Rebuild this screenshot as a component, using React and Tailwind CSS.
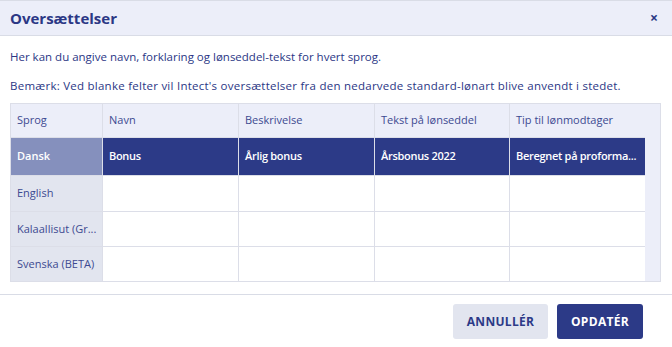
import React from 'react'

const cols = [
  { key: 'sprog', label: 'Sprog', w: 'w-[91px]' },
  { key: 'navn', label: 'Navn', w: 'w-[136px]' },
  { key: 'beskr', label: 'Beskrivelse', w: 'w-[136px]' },
  { key: 'tekst', label: 'Tekst på lønseddel', w: 'w-[135px]' },
  { key: 'tip', label: 'Tip til lønmodtager', w: 'w-[136px]' },
]

const rows = [
  { sprog: 'Dansk', navn: 'Bonus', beskr: 'Årlig bonus', tekst: 'Årsbonus 2022', tip: 'Beregnet på proforma...', h: 'h-[38px]', active: true },
  { sprog: 'English', h: 'h-[36px]' },
  { sprog: 'Kalaallisut (Gr...', h: 'h-[35px]' },
  { sprog: 'Svenska (BETA)', h: 'h-[34px]' },
]

export default function App() {
  return (
    <div className="w-[672px] h-[347px] bg-white text-[#2b3785] overflow-hidden" style={{ fontFamily: '"Open Sans", sans-serif' }}>
      {/* header */}
      <div className="h-[36px] bg-[#eceef9] border-t border-b border-[#d9dce6] flex items-center justify-between pl-[10px] pr-[14px]">
        <span className="text-[15px] font-bold">Oversættelser</span>
        <span className="text-[14px] font-bold leading-none">×</span>
      </div>

      <div className="px-[10px]">
        <p className="text-[11.5px] mt-[13px] leading-[16px]">Her kan du angive navn, forklaring og lønseddel-tekst for hvert sprog.</p>
        <p className="text-[11.5px] mt-[13px] leading-[16px] tracking-[0.25px]">Bemærk: Ved blanke felter vil Intect's oversættelser fra den nedarvede standard-lønart blive anvendt i stedet.</p>

        {/* table */}
        <div className="mt-[9px] w-[651px] border border-[#dcdee8] bg-[#eceef9] flex">
          <div className="flex flex-col">
            <div className="flex h-[34px] border-b border-[#dcdee8]">
              {cols.map((c, i) => (
                <div key={c.key} className={`${c.w} flex items-center px-[6px] text-[11px] text-[#3d4a91] ${i > 0 ? 'border-l border-[#dcdee8]' : ''}`}>
                  {c.label}
                </div>
              ))}
            </div>
            {rows.map((r, ri) => (
              <div key={r.sprog} className={`flex ${r.h} ${ri < rows.length - 1 ? 'border-b border-[#dcdee8]' : ''}`}>
                {cols.map((c, i) => {
                  let cls = ''
                  if (i === 0) cls = r.active ? 'bg-[#8590bd] text-white font-semibold' : 'bg-[#e2e5ef] text-[#3d4a91]'
                  else cls = r.active ? 'bg-[#2c3a87] text-white font-semibold tracking-[-0.3px]' : 'bg-white'
                  return (
                    <div key={c.key} className={`${c.w} ${cls} flex items-center px-[6px] text-[11px] whitespace-nowrap overflow-hidden ${i > 0 ? 'border-l border-[#dcdee8]' : ''}`}>
                      {r[c.key]}
                    </div>
                  )
                })}
              </div>
            ))}
          </div>
          <div className="flex-1 bg-[#eceef9]" />
        </div>
      </div>

      {/* footer */}
      <div className="mt-[12px] border-t border-[#d9dce6] flex justify-end gap-[9px] pr-[29px] pt-[9px]">
        <button className="w-[95px] h-[35px] rounded-[3px] bg-[#e2e5ef] text-[#2c3a87] text-[12px] font-bold tracking-[0.3px]">ANNULLÉR</button>
        <button className="w-[86px] h-[35px] rounded-[3px] bg-[#2c3a87] text-white text-[12px] font-bold tracking-[0.3px]">OPDATÉR</button>
      </div>
    </div>
  )
}
